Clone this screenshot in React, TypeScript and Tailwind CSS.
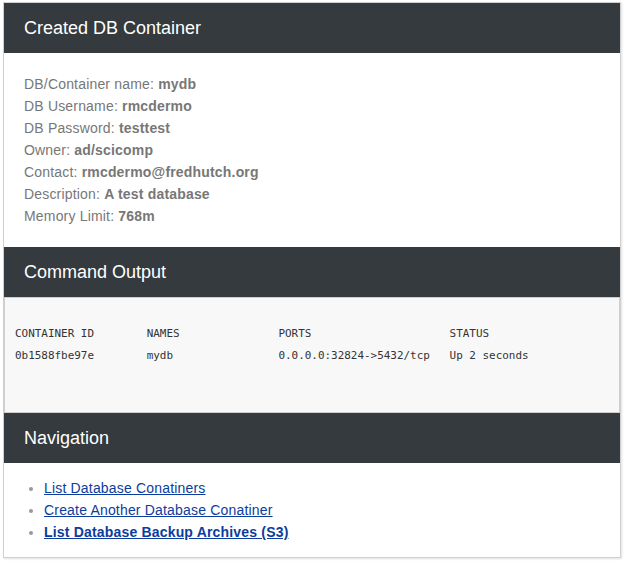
const details = [
  { label: "DB/Container name:", value: "mydb" },
  { label: "DB Username:", value: "rmcdermo" },
  { label: "DB Password:", value: "testtest" },
  { label: "Owner:", value: "ad/scicomp" },
  { label: "Contact:", value: "rmcdermo@fredhutch.org" },
  { label: "Description:", value: "A test database" },
  { label: "Memory Limit:", value: "768m" },
];

const output = `CONTAINER ID        NAMES               PORTS                     STATUS
0b1588fbe97e        mydb                0.0.0.0:32824->5432/tcp   Up 2 seconds`;

const links = [
  { text: "List Database Conatiners", bold: false },
  { text: "Create Another Database Conatiner", bold: false },
  { text: "List Database Backup Archives (S3)", bold: true },
];

function PanelHeader({ title }: { title: string }) {
  return (
    <div className="h-[50px] bg-[#343a3d] flex items-center px-5 text-white text-[18px]">
      {title}
    </div>
  );
}

export default function App() {
  return (
    <div className="min-h-screen bg-white pt-[2px] pl-[3px] font-['Liberation_Sans',Arial,sans-serif]">
      <div className="w-[618px] border border-[#d0d0d0] shadow-[1px_1px_2px_rgba(0,0,0,0.12)] bg-white">
        <PanelHeader title="Created DB Container" />
        <div className="px-5 py-5 text-[14px] leading-[22px] tracking-[0.18px] text-[#777]">
          {details.map((d) => (
            <div key={d.label}>
              {d.label} <b>{d.value}</b>
            </div>
          ))}
        </div>

        <PanelHeader title="Command Output" />
        <pre className="border border-[#cfcfcf] bg-[#f8f8f8] pl-[10px] pt-[25px] pb-[45px] font-['DejaVu_Sans_Mono',monospace] text-[10.95px] leading-[22px] text-[#333]">
          {output}
        </pre>

        <PanelHeader title="Navigation" />
        <ul className="list-disc marker:text-[#999] pl-[40px] pt-[14px] pb-[14px] text-[14px] leading-[22px] tracking-[0.18px]">
          {links.map((l) => (
            <li key={l.text}>
              <a href="#" className={`underline text-[#0c3c9c] ${l.bold ? "font-bold" : ""}`}>
                {l.text}
              </a>
            </li>
          ))}
        </ul>
      </div>
    </div>
  );
}
